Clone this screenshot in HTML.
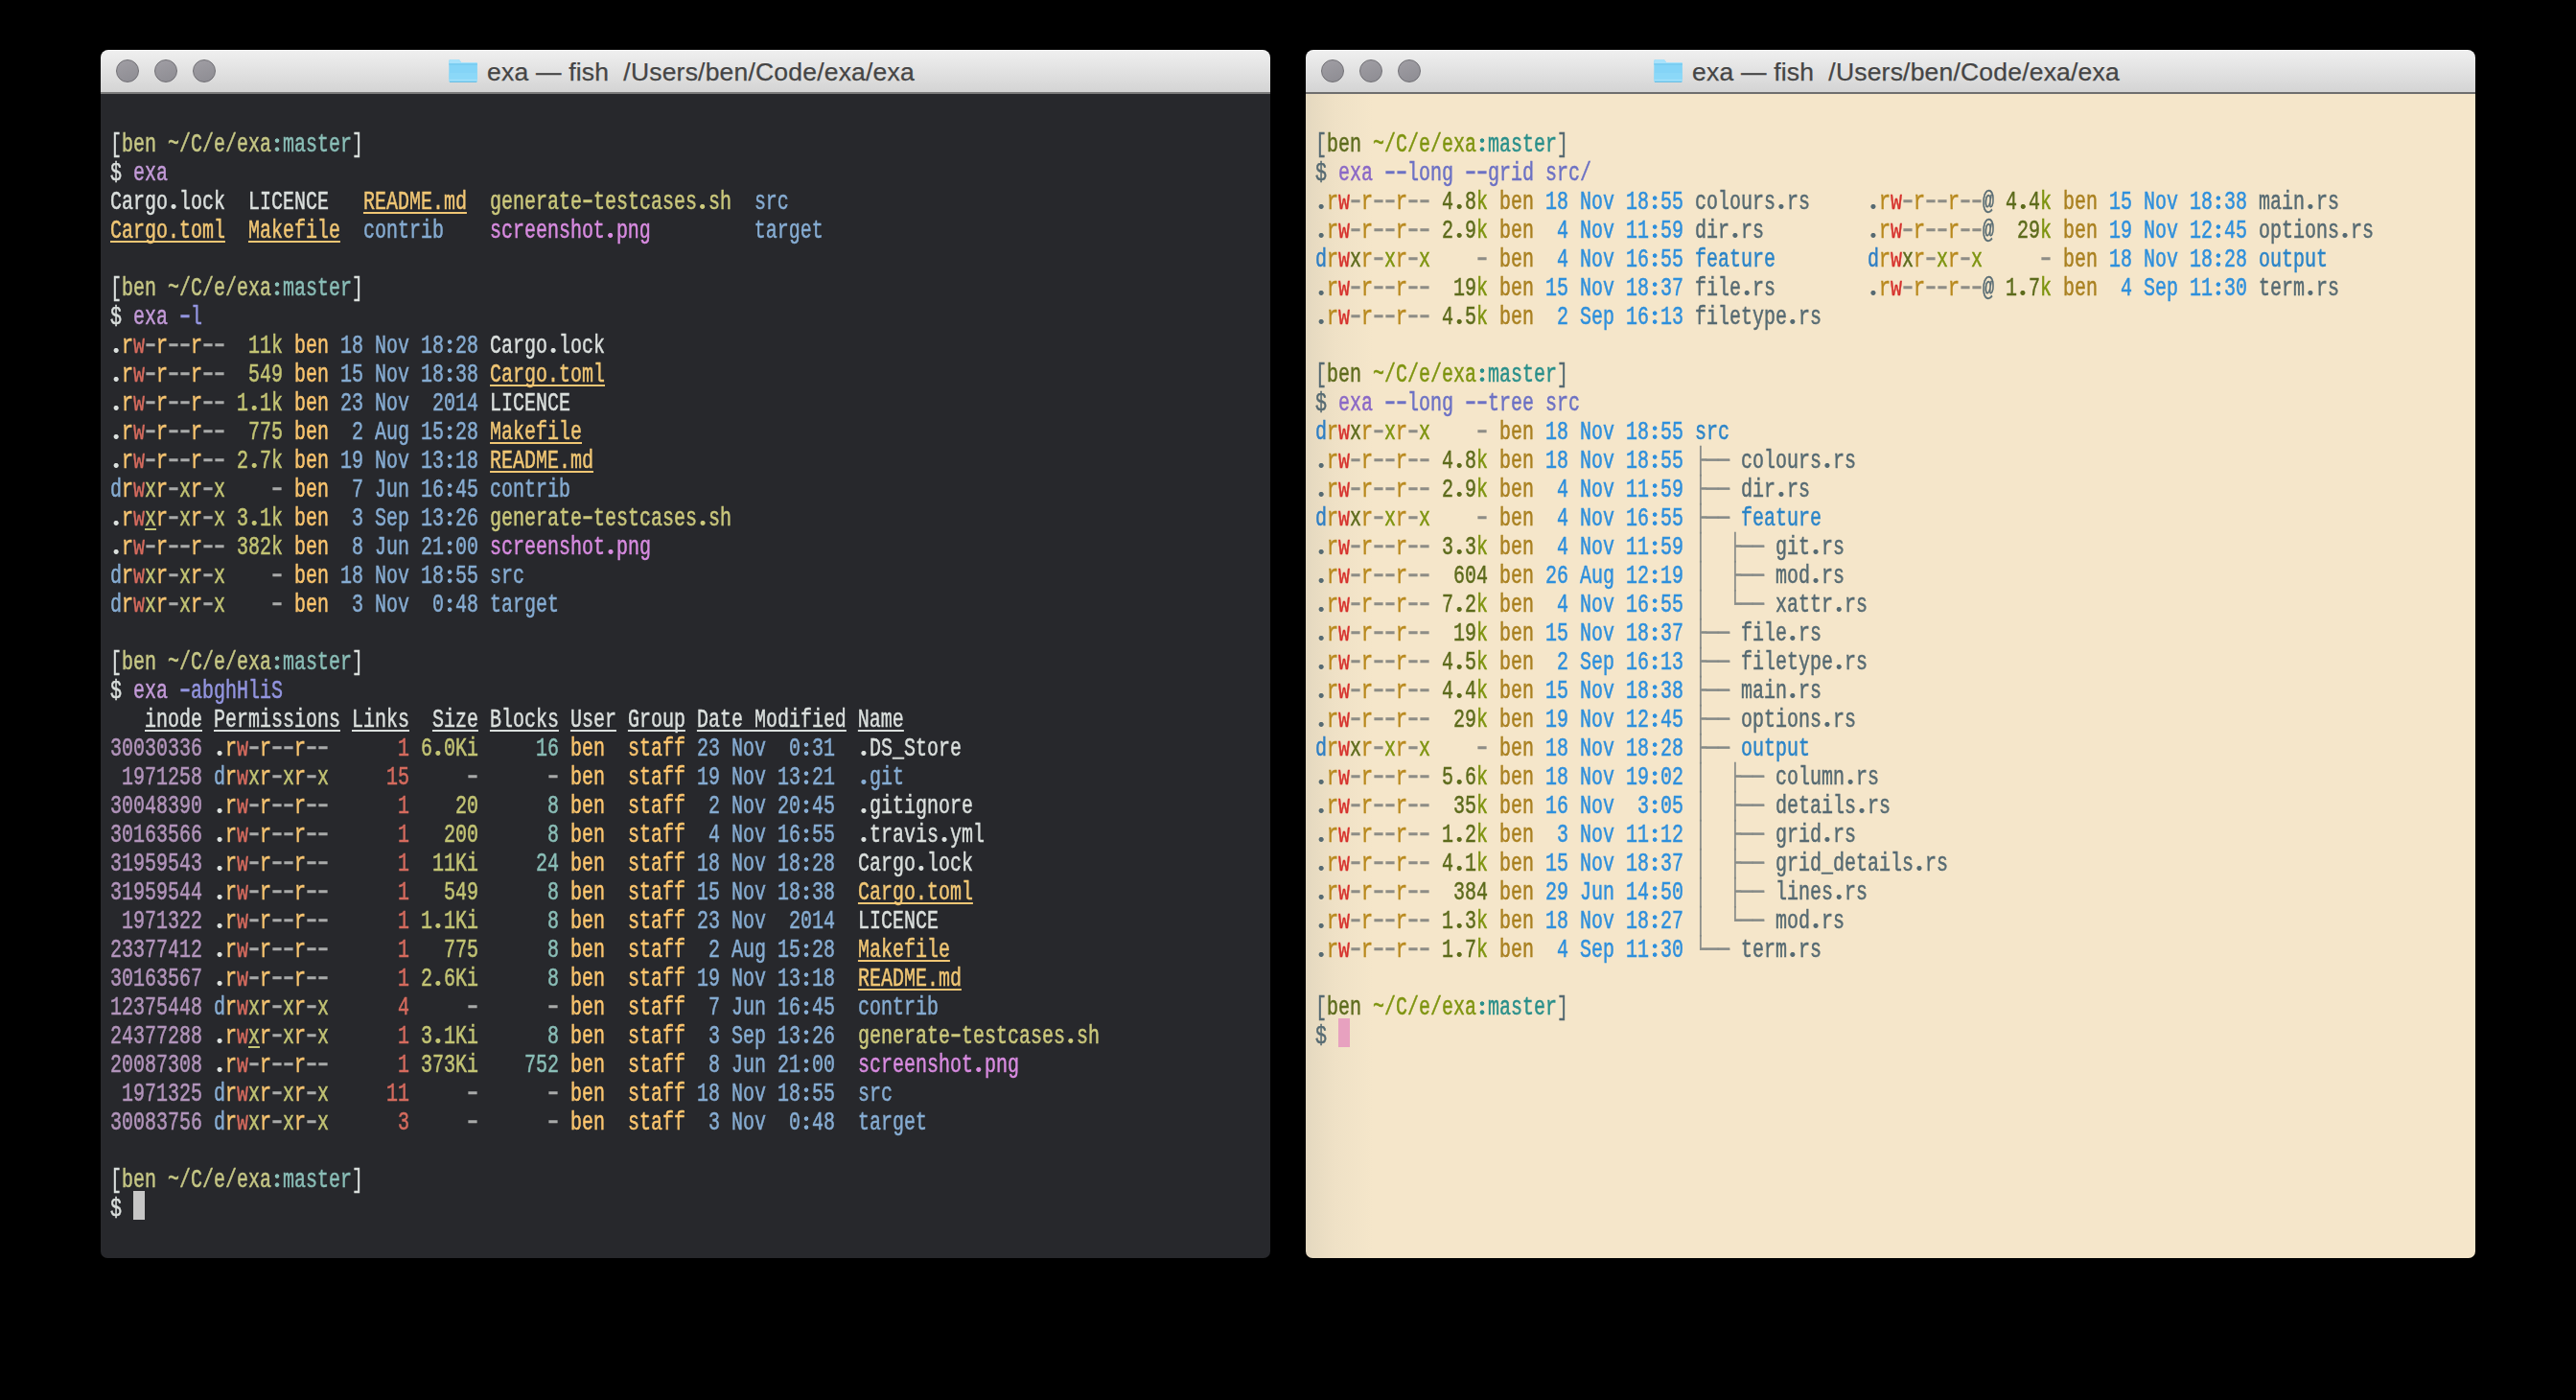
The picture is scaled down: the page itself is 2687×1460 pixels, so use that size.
<!DOCTYPE html><html><head><meta charset="utf-8"><style>

*{margin:0;padding:0;box-sizing:border-box}
html,body{width:2687px;height:1460px;background:#000;overflow:hidden}
.w{position:absolute;top:52px;width:1220px;height:1260px;border-radius:8px 8px 7px 7px;overflow:hidden}
.tb{position:absolute;left:0;top:0;width:100%;height:44px;background:linear-gradient(#efefef,#d4d4d4);border-top:1px solid #fbfbfb}
.sep{position:absolute;left:0;top:44px;width:100%;height:2px;background:#7a7a7a}
.R .sep{background:#6e6e6e}
.bd{position:absolute;left:0;top:46px;width:100%;bottom:0}
.L .bd{background:#27282c}
.R .bd{background:linear-gradient(90deg,#e4d8bf 0,#efe1c6 30px,#f5e6ca 70px,#f5e6ca 100%)}
.tl{position:absolute;top:10px;width:24px;height:24px;border-radius:50%;background:linear-gradient(160deg,#a09ea4,#8d8c92);border:1px solid #706f74}
.tt{position:absolute;top:8px;left:0;width:100%;height:32px;font:26.5px "Liberation Sans",sans-serif;color:#454545;white-space:pre;letter-spacing:0.2px;-webkit-text-stroke:0.25px #454545}
.fo{position:absolute;top:10px;width:30px;height:24px}
.tx{position:absolute;left:10px;top:0;transform-origin:0 0;transform:scaleX(0.722022)}
.r{position:absolute;left:0;white-space:pre;font:27.700px/30px "Liberation Mono",monospace}
i{font-style:normal;text-decoration-skip-ink:none}
b{font-weight:normal;display:inline-block;transform:translateY(-1px) scaleY(1.35)}
s{text-decoration:none;display:inline-block;-webkit-text-fill-color:transparent;-webkit-text-stroke-color:transparent;background:radial-gradient(3.7px 2.6px at 50% 19.6px,currentColor 72%,transparent 100%),radial-gradient(3.7px 2.6px at 50% 10.6px,currentColor 72%,transparent 100%)}
u{text-decoration:none;display:inline-block;-webkit-text-fill-color:transparent;-webkit-text-stroke-color:transparent;background:radial-gradient(4.1px 2.9px at 50% 19.4px,currentColor 72%,transparent 100%)}
.tx .r{-webkit-text-stroke:0.5px currentColor}
.cur{position:absolute;width:12px;height:30px}
/* left palette */
.L .r{color:#dadfdd}
.L .pt{color:#dadfdd}.L .pd{color:#86acd2}.L .pr{color:#f7c470}.L .pw{color:#d56b5e}
.L .px,.L .px1,.L .px1u{color:#c3c474}.L .px1u{text-decoration:underline;text-decoration-thickness:2px;text-underline-offset:3px}
.L .pn{color:#a8aaa9}.L .sz,.L .su{color:#c3c474}.L .us{color:#fbc56e}.L .dt{color:#86acd2}
.L .fn{color:#dadfdd}.L .fd{color:#86acd2}.L .fx{color:#cbc87c}.L .fi{color:#d88be0}
.L .fb{color:#f0c674;text-decoration:underline;text-decoration-thickness:2px;text-underline-offset:3px}
.L .hd{color:#dadfdd;text-decoration:underline;text-decoration-thickness:2px;text-underline-offset:3px}
.L .in{color:#b294bb}.L .ln{color:#d56b5e}.L .bk{color:#8abeb7}
.L .pb{color:#dadfdd}.L .pu,.L .pp{color:#c6c785}.L .pm{color:#8abeb7}
.L .dl{color:#dadfdd}.L .ce{color:#c39ad8}.L .ca{color:#9395e0}
.L .cur{background:#c6c6c6}
/* right palette */
.R .r{color:#566a72}
.R .pt{color:#566a72}.R .pd{color:#2f7fc4}.R .pr{color:#b8891e}.R .pw{color:#d6322d}
.R .px{color:#7e9410}.R .px1{color:#5d6b1c}.R .px1u{color:#5d6b1c;text-decoration:underline}
.R .pn{color:#8e8d86}.R .sz{color:#5d6b1c}.R .su{color:#7e9410}.R .us{color:#a98020}.R .dt{color:#2e8fdc}
.R .fn{color:#566a72}.R .fd{color:#2b84c8}.R .fx{color:#7e9410}.R .fi{color:#d33682}.R .fb{color:#a98222}
.R .tr{color:#858a87}
.R .pb{color:#566a72}.R .pu{color:#5d6b1c}.R .pp{color:#7e9410}.R .pm{color:#2a8f8a}
.R .dl{color:#566a72}.R .ce{color:#8a68c6}.R .ca{color:#6c71c4}
.R .cur{background:#e7a1bf}

</style></head><body>
<div class="w L" style="left:105px">
<div class="tb"></div><div class="sep"></div><div class="bd"></div>
<div class="tl" style="left:16px"></div>
<div class="tl" style="left:56px"></div>
<div class="tl" style="left:96px"></div>
<svg class="fo" style="left:363px" viewBox="0 0 30 24" width="30" height="24"><path d="M0.3 1.8Q0.3 0.1 2 0.1H10Q11 0.1 11.6 0.9L13 3.1H28.3Q29.9 3.1 29.9 4.6V22.3Q29.9 23.9 28.3 23.9H2Q0.3 23.9 0.3 22.3Z" fill="#84d4f7"/><path d="M0.3 1.8Q0.3 0.1 2 0.1H10Q11 0.1 11.6 0.9L13 3.1H28.3Q29.9 3.1 29.9 4.6V4.4H0.3Z" fill="#a8e2fb"/><rect x="0.3" y="4.3" width="29.6" height="1.3" fill="#73c9ef"/><rect x="0.3" y="14" width="29.6" height="6.5" fill="#8fdaf8" opacity="0.6"/><rect x="0.3" y="20.7" width="29.6" height="1.5" fill="#a3e1fa"/><rect x="1" y="23" width="28.2" height="0.9" fill="#70bcdf"/></svg>
<div class="tt" style="left:403px;width:auto">exa — fish  /Users/ben/Code/exa/exa</div>
<div class="tx">
<div class="r" style="top:84.23px"><i class="pb">[</i><i class="pu">ben</i><i class="pp"> ~/C/e/exa</i><i class="pm"><s>:</s>master</i><i class="pb">]</i></div>
<div class="r" style="top:114.23px"><i class="dl">$ </i><i class="ce">exa</i></div>
<div class="r" style="top:144.23px"><i class="fn">Cargo<u>.</u>lock</i>  <i class="fn">LICENCE</i>   <i class="fb">README.md</i>  <i class="fx">generate<b>–</b>testcases<u>.</u>sh</i>  <i class="fd">src</i></div>
<div class="r" style="top:174.23px"><i class="fb">Cargo.toml</i>  <i class="fb">Makefile</i>  <i class="fd">contrib</i>    <i class="fi">screenshot<u>.</u>png</i>         <i class="fd">target</i></div>
<div class="r" style="top:234.23px"><i class="pb">[</i><i class="pu">ben</i><i class="pp"> ~/C/e/exa</i><i class="pm"><s>:</s>master</i><i class="pb">]</i></div>
<div class="r" style="top:264.23px"><i class="dl">$ </i><i class="ce">exa</i><i class="ca"> <b>–</b>l</i></div>
<div class="r" style="top:294.23px"><i class="pt"><u>.</u></i><i class="pr">r</i><i class="pw">w</i><i class="pn"><b>–</b></i><i class="pr">r</i><i class="pn"><b>–</b></i><i class="pn"><b>–</b></i><i class="pr">r</i><i class="pn"><b>–</b></i><i class="pn"><b>–</b></i>  <i class="sz">11</i><i class="su">k</i> <i class="us">ben</i> <i class="dt">18 Nov 18<s>:</s>28</i> <i class="fn">Cargo<u>.</u>lock</i></div>
<div class="r" style="top:324.23px"><i class="pt"><u>.</u></i><i class="pr">r</i><i class="pw">w</i><i class="pn"><b>–</b></i><i class="pr">r</i><i class="pn"><b>–</b></i><i class="pn"><b>–</b></i><i class="pr">r</i><i class="pn"><b>–</b></i><i class="pn"><b>–</b></i>  <i class="sz">549</i> <i class="us">ben</i> <i class="dt">15 Nov 18<s>:</s>38</i> <i class="fb">Cargo.toml</i></div>
<div class="r" style="top:354.23px"><i class="pt"><u>.</u></i><i class="pr">r</i><i class="pw">w</i><i class="pn"><b>–</b></i><i class="pr">r</i><i class="pn"><b>–</b></i><i class="pn"><b>–</b></i><i class="pr">r</i><i class="pn"><b>–</b></i><i class="pn"><b>–</b></i> <i class="sz">1<u>.</u>1</i><i class="su">k</i> <i class="us">ben</i> <i class="dt">23 Nov  2014</i> <i class="fn">LICENCE</i></div>
<div class="r" style="top:384.23px"><i class="pt"><u>.</u></i><i class="pr">r</i><i class="pw">w</i><i class="pn"><b>–</b></i><i class="pr">r</i><i class="pn"><b>–</b></i><i class="pn"><b>–</b></i><i class="pr">r</i><i class="pn"><b>–</b></i><i class="pn"><b>–</b></i>  <i class="sz">775</i> <i class="us">ben</i> <i class="dt"> 2 Aug 15<s>:</s>28</i> <i class="fb">Makefile</i></div>
<div class="r" style="top:414.23px"><i class="pt"><u>.</u></i><i class="pr">r</i><i class="pw">w</i><i class="pn"><b>–</b></i><i class="pr">r</i><i class="pn"><b>–</b></i><i class="pn"><b>–</b></i><i class="pr">r</i><i class="pn"><b>–</b></i><i class="pn"><b>–</b></i> <i class="sz">2<u>.</u>7</i><i class="su">k</i> <i class="us">ben</i> <i class="dt">19 Nov 13<s>:</s>18</i> <i class="fb">README.md</i></div>
<div class="r" style="top:444.23px"><i class="pd">d</i><i class="pr">r</i><i class="pw">w</i><i class="px1">x</i><i class="pr">r</i><i class="pn"><b>–</b></i><i class="px">x</i><i class="pr">r</i><i class="pn"><b>–</b></i><i class="px">x</i>    <i class="pn"><b>–</b></i> <i class="us">ben</i> <i class="dt"> 7 Jun 16<s>:</s>45</i> <i class="fd">contrib</i></div>
<div class="r" style="top:474.23px"><i class="pt"><u>.</u></i><i class="pr">r</i><i class="pw">w</i><i class="px1u">x</i><i class="pr">r</i><i class="pn"><b>–</b></i><i class="px">x</i><i class="pr">r</i><i class="pn"><b>–</b></i><i class="px">x</i> <i class="sz">3<u>.</u>1</i><i class="su">k</i> <i class="us">ben</i> <i class="dt"> 3 Sep 13<s>:</s>26</i> <i class="fx">generate<b>–</b>testcases<u>.</u>sh</i></div>
<div class="r" style="top:504.23px"><i class="pt"><u>.</u></i><i class="pr">r</i><i class="pw">w</i><i class="pn"><b>–</b></i><i class="pr">r</i><i class="pn"><b>–</b></i><i class="pn"><b>–</b></i><i class="pr">r</i><i class="pn"><b>–</b></i><i class="pn"><b>–</b></i> <i class="sz">382</i><i class="su">k</i> <i class="us">ben</i> <i class="dt"> 8 Jun 21<s>:</s>00</i> <i class="fi">screenshot<u>.</u>png</i></div>
<div class="r" style="top:534.23px"><i class="pd">d</i><i class="pr">r</i><i class="pw">w</i><i class="px1">x</i><i class="pr">r</i><i class="pn"><b>–</b></i><i class="px">x</i><i class="pr">r</i><i class="pn"><b>–</b></i><i class="px">x</i>    <i class="pn"><b>–</b></i> <i class="us">ben</i> <i class="dt">18 Nov 18<s>:</s>55</i> <i class="fd">src</i></div>
<div class="r" style="top:564.23px"><i class="pd">d</i><i class="pr">r</i><i class="pw">w</i><i class="px1">x</i><i class="pr">r</i><i class="pn"><b>–</b></i><i class="px">x</i><i class="pr">r</i><i class="pn"><b>–</b></i><i class="px">x</i>    <i class="pn"><b>–</b></i> <i class="us">ben</i> <i class="dt"> 3 Nov  0<s>:</s>48</i> <i class="fd">target</i></div>
<div class="r" style="top:624.23px"><i class="pb">[</i><i class="pu">ben</i><i class="pp"> ~/C/e/exa</i><i class="pm"><s>:</s>master</i><i class="pb">]</i></div>
<div class="r" style="top:654.23px"><i class="dl">$ </i><i class="ce">exa</i><i class="ca"> <b>–</b>abghHliS</i></div>
<div class="r" style="top:684.23px">   <i class="hd">inode</i> <i class="hd">Permissions</i> <i class="hd">Links</i>  <i class="hd">Size</i> <i class="hd">Blocks</i> <i class="hd">User</i> <i class="hd">Group</i> <i class="hd">Date Modified</i> <i class="hd">Name</i></div>
<div class="r" style="top:714.23px"><i class="in">30030336</i> <i class="pt"><u>.</u></i><i class="pr">r</i><i class="pw">w</i><i class="pn"><b>–</b></i><i class="pr">r</i><i class="pn"><b>–</b></i><i class="pn"><b>–</b></i><i class="pr">r</i><i class="pn"><b>–</b></i><i class="pn"><b>–</b></i>  <i class="ln">    1</i> <i class="sz">6<u>.</u>0</i><i class="su">Ki</i> <i class="bk">    16</i> <i class="us">ben</i>  <i class="us">staff</i> <i class="dt">23 Nov  0<s>:</s>31</i>  <i class="fn"><u>.</u>DS_Store</i></div>
<div class="r" style="top:744.23px"><i class="in"> 1971258</i> <i class="pd">d</i><i class="pr">r</i><i class="pw">w</i><i class="px1">x</i><i class="pr">r</i><i class="pn"><b>–</b></i><i class="px">x</i><i class="pr">r</i><i class="pn"><b>–</b></i><i class="px">x</i>  <i class="ln">   15</i>     <i class="pn"><b>–</b></i>      <i class="pn"><b>–</b></i> <i class="us">ben</i>  <i class="us">staff</i> <i class="dt">19 Nov 13<s>:</s>21</i>  <i class="fd"><u>.</u>git</i></div>
<div class="r" style="top:774.23px"><i class="in">30048390</i> <i class="pt"><u>.</u></i><i class="pr">r</i><i class="pw">w</i><i class="pn"><b>–</b></i><i class="pr">r</i><i class="pn"><b>–</b></i><i class="pn"><b>–</b></i><i class="pr">r</i><i class="pn"><b>–</b></i><i class="pn"><b>–</b></i>  <i class="ln">    1</i>    <i class="sz">20</i> <i class="bk">     8</i> <i class="us">ben</i>  <i class="us">staff</i> <i class="dt"> 2 Nov 20<s>:</s>45</i>  <i class="fn"><u>.</u>gitignore</i></div>
<div class="r" style="top:804.23px"><i class="in">30163566</i> <i class="pt"><u>.</u></i><i class="pr">r</i><i class="pw">w</i><i class="pn"><b>–</b></i><i class="pr">r</i><i class="pn"><b>–</b></i><i class="pn"><b>–</b></i><i class="pr">r</i><i class="pn"><b>–</b></i><i class="pn"><b>–</b></i>  <i class="ln">    1</i>   <i class="sz">200</i> <i class="bk">     8</i> <i class="us">ben</i>  <i class="us">staff</i> <i class="dt"> 4 Nov 16<s>:</s>55</i>  <i class="fn"><u>.</u>travis<u>.</u>yml</i></div>
<div class="r" style="top:834.23px"><i class="in">31959543</i> <i class="pt"><u>.</u></i><i class="pr">r</i><i class="pw">w</i><i class="pn"><b>–</b></i><i class="pr">r</i><i class="pn"><b>–</b></i><i class="pn"><b>–</b></i><i class="pr">r</i><i class="pn"><b>–</b></i><i class="pn"><b>–</b></i>  <i class="ln">    1</i>  <i class="sz">11</i><i class="su">Ki</i> <i class="bk">    24</i> <i class="us">ben</i>  <i class="us">staff</i> <i class="dt">18 Nov 18<s>:</s>28</i>  <i class="fn">Cargo<u>.</u>lock</i></div>
<div class="r" style="top:864.23px"><i class="in">31959544</i> <i class="pt"><u>.</u></i><i class="pr">r</i><i class="pw">w</i><i class="pn"><b>–</b></i><i class="pr">r</i><i class="pn"><b>–</b></i><i class="pn"><b>–</b></i><i class="pr">r</i><i class="pn"><b>–</b></i><i class="pn"><b>–</b></i>  <i class="ln">    1</i>   <i class="sz">549</i> <i class="bk">     8</i> <i class="us">ben</i>  <i class="us">staff</i> <i class="dt">15 Nov 18<s>:</s>38</i>  <i class="fb">Cargo.toml</i></div>
<div class="r" style="top:894.23px"><i class="in"> 1971322</i> <i class="pt"><u>.</u></i><i class="pr">r</i><i class="pw">w</i><i class="pn"><b>–</b></i><i class="pr">r</i><i class="pn"><b>–</b></i><i class="pn"><b>–</b></i><i class="pr">r</i><i class="pn"><b>–</b></i><i class="pn"><b>–</b></i>  <i class="ln">    1</i> <i class="sz">1<u>.</u>1</i><i class="su">Ki</i> <i class="bk">     8</i> <i class="us">ben</i>  <i class="us">staff</i> <i class="dt">23 Nov  2014</i>  <i class="fn">LICENCE</i></div>
<div class="r" style="top:924.23px"><i class="in">23377412</i> <i class="pt"><u>.</u></i><i class="pr">r</i><i class="pw">w</i><i class="pn"><b>–</b></i><i class="pr">r</i><i class="pn"><b>–</b></i><i class="pn"><b>–</b></i><i class="pr">r</i><i class="pn"><b>–</b></i><i class="pn"><b>–</b></i>  <i class="ln">    1</i>   <i class="sz">775</i> <i class="bk">     8</i> <i class="us">ben</i>  <i class="us">staff</i> <i class="dt"> 2 Aug 15<s>:</s>28</i>  <i class="fb">Makefile</i></div>
<div class="r" style="top:954.23px"><i class="in">30163567</i> <i class="pt"><u>.</u></i><i class="pr">r</i><i class="pw">w</i><i class="pn"><b>–</b></i><i class="pr">r</i><i class="pn"><b>–</b></i><i class="pn"><b>–</b></i><i class="pr">r</i><i class="pn"><b>–</b></i><i class="pn"><b>–</b></i>  <i class="ln">    1</i> <i class="sz">2<u>.</u>6</i><i class="su">Ki</i> <i class="bk">     8</i> <i class="us">ben</i>  <i class="us">staff</i> <i class="dt">19 Nov 13<s>:</s>18</i>  <i class="fb">README.md</i></div>
<div class="r" style="top:984.23px"><i class="in">12375448</i> <i class="pd">d</i><i class="pr">r</i><i class="pw">w</i><i class="px1">x</i><i class="pr">r</i><i class="pn"><b>–</b></i><i class="px">x</i><i class="pr">r</i><i class="pn"><b>–</b></i><i class="px">x</i>  <i class="ln">    4</i>     <i class="pn"><b>–</b></i>      <i class="pn"><b>–</b></i> <i class="us">ben</i>  <i class="us">staff</i> <i class="dt"> 7 Jun 16<s>:</s>45</i>  <i class="fd">contrib</i></div>
<div class="r" style="top:1014.23px"><i class="in">24377288</i> <i class="pt"><u>.</u></i><i class="pr">r</i><i class="pw">w</i><i class="px1u">x</i><i class="pr">r</i><i class="pn"><b>–</b></i><i class="px">x</i><i class="pr">r</i><i class="pn"><b>–</b></i><i class="px">x</i>  <i class="ln">    1</i> <i class="sz">3<u>.</u>1</i><i class="su">Ki</i> <i class="bk">     8</i> <i class="us">ben</i>  <i class="us">staff</i> <i class="dt"> 3 Sep 13<s>:</s>26</i>  <i class="fx">generate<b>–</b>testcases<u>.</u>sh</i></div>
<div class="r" style="top:1044.23px"><i class="in">20087308</i> <i class="pt"><u>.</u></i><i class="pr">r</i><i class="pw">w</i><i class="pn"><b>–</b></i><i class="pr">r</i><i class="pn"><b>–</b></i><i class="pn"><b>–</b></i><i class="pr">r</i><i class="pn"><b>–</b></i><i class="pn"><b>–</b></i>  <i class="ln">    1</i> <i class="sz">373</i><i class="su">Ki</i> <i class="bk">   752</i> <i class="us">ben</i>  <i class="us">staff</i> <i class="dt"> 8 Jun 21<s>:</s>00</i>  <i class="fi">screenshot<u>.</u>png</i></div>
<div class="r" style="top:1074.23px"><i class="in"> 1971325</i> <i class="pd">d</i><i class="pr">r</i><i class="pw">w</i><i class="px1">x</i><i class="pr">r</i><i class="pn"><b>–</b></i><i class="px">x</i><i class="pr">r</i><i class="pn"><b>–</b></i><i class="px">x</i>  <i class="ln">   11</i>     <i class="pn"><b>–</b></i>      <i class="pn"><b>–</b></i> <i class="us">ben</i>  <i class="us">staff</i> <i class="dt">18 Nov 18<s>:</s>55</i>  <i class="fd">src</i></div>
<div class="r" style="top:1104.23px"><i class="in">30083756</i> <i class="pd">d</i><i class="pr">r</i><i class="pw">w</i><i class="px1">x</i><i class="pr">r</i><i class="pn"><b>–</b></i><i class="px">x</i><i class="pr">r</i><i class="pn"><b>–</b></i><i class="px">x</i>  <i class="ln">    3</i>     <i class="pn"><b>–</b></i>      <i class="pn"><b>–</b></i> <i class="us">ben</i>  <i class="us">staff</i> <i class="dt"> 3 Nov  0<s>:</s>48</i>  <i class="fd">target</i></div>
<div class="r" style="top:1164.23px"><i class="pb">[</i><i class="pu">ben</i><i class="pp"> ~/C/e/exa</i><i class="pm"><s>:</s>master</i><i class="pb">]</i></div>
<div class="r" style="top:1194.23px"><i class="dl">$ </i></div>
</div>
<div class="cur" style="left:34px;top:1190px"></div>
</div>
<div class="w R" style="left:1362px">
<div class="tb"></div><div class="sep"></div><div class="bd"></div>
<div class="tl" style="left:16px"></div>
<div class="tl" style="left:56px"></div>
<div class="tl" style="left:96px"></div>
<svg class="fo" style="left:363px" viewBox="0 0 30 24" width="30" height="24"><path d="M0.3 1.8Q0.3 0.1 2 0.1H10Q11 0.1 11.6 0.9L13 3.1H28.3Q29.9 3.1 29.9 4.6V22.3Q29.9 23.9 28.3 23.9H2Q0.3 23.9 0.3 22.3Z" fill="#84d4f7"/><path d="M0.3 1.8Q0.3 0.1 2 0.1H10Q11 0.1 11.6 0.9L13 3.1H28.3Q29.9 3.1 29.9 4.6V4.4H0.3Z" fill="#a8e2fb"/><rect x="0.3" y="4.3" width="29.6" height="1.3" fill="#73c9ef"/><rect x="0.3" y="14" width="29.6" height="6.5" fill="#8fdaf8" opacity="0.6"/><rect x="0.3" y="20.7" width="29.6" height="1.5" fill="#a3e1fa"/><rect x="1" y="23" width="28.2" height="0.9" fill="#70bcdf"/></svg>
<div class="tt" style="left:403px;width:auto">exa — fish  /Users/ben/Code/exa/exa</div>
<div class="tx">
<div class="r" style="top:84.23px"><i class="pb">[</i><i class="pu">ben</i><i class="pp"> ~/C/e/exa</i><i class="pm"><s>:</s>master</i><i class="pb">]</i></div>
<div class="r" style="top:114.23px"><i class="dl">$ </i><i class="ce">exa</i><i class="ca"> <b>–</b><b>–</b>long <b>–</b><b>–</b>grid src/</i></div>
<div class="r" style="top:144.23px"><i class="pt"><u>.</u></i><i class="pr">r</i><i class="pw">w</i><i class="pn"><b>–</b></i><i class="pr">r</i><i class="pn"><b>–</b></i><i class="pn"><b>–</b></i><i class="pr">r</i><i class="pn"><b>–</b></i><i class="pn"><b>–</b></i> <i class="sz">4<u>.</u>8</i><i class="su">k</i> <i class="us">ben</i> <i class="dt">18 Nov 18<s>:</s>55</i> <i class="fn">colours<u>.</u>rs</i>     <i class="pt"><u>.</u></i><i class="pr">r</i><i class="pw">w</i><i class="pn"><b>–</b></i><i class="pr">r</i><i class="pn"><b>–</b></i><i class="pn"><b>–</b></i><i class="pr">r</i><i class="pn"><b>–</b></i><i class="pn"><b>–</b></i><i class="pt">@</i> <i class="sz">4<u>.</u>4</i><i class="su">k</i> <i class="us">ben</i> <i class="dt">15 Nov 18<s>:</s>38</i> <i class="fn">main<u>.</u>rs</i></div>
<div class="r" style="top:174.23px"><i class="pt"><u>.</u></i><i class="pr">r</i><i class="pw">w</i><i class="pn"><b>–</b></i><i class="pr">r</i><i class="pn"><b>–</b></i><i class="pn"><b>–</b></i><i class="pr">r</i><i class="pn"><b>–</b></i><i class="pn"><b>–</b></i> <i class="sz">2<u>.</u>9</i><i class="su">k</i> <i class="us">ben</i> <i class="dt"> 4 Nov 11<s>:</s>59</i> <i class="fn">dir<u>.</u>rs</i>         <i class="pt"><u>.</u></i><i class="pr">r</i><i class="pw">w</i><i class="pn"><b>–</b></i><i class="pr">r</i><i class="pn"><b>–</b></i><i class="pn"><b>–</b></i><i class="pr">r</i><i class="pn"><b>–</b></i><i class="pn"><b>–</b></i><i class="pt">@</i>  <i class="sz">29</i><i class="su">k</i> <i class="us">ben</i> <i class="dt">19 Nov 12<s>:</s>45</i> <i class="fn">options<u>.</u>rs</i></div>
<div class="r" style="top:204.23px"><i class="pd">d</i><i class="pr">r</i><i class="pw">w</i><i class="px1">x</i><i class="pr">r</i><i class="pn"><b>–</b></i><i class="px">x</i><i class="pr">r</i><i class="pn"><b>–</b></i><i class="px">x</i>    <i class="pn"><b>–</b></i> <i class="us">ben</i> <i class="dt"> 4 Nov 16<s>:</s>55</i> <i class="fd">feature</i>        <i class="pd">d</i><i class="pr">r</i><i class="pw">w</i><i class="px1">x</i><i class="pr">r</i><i class="pn"><b>–</b></i><i class="px">x</i><i class="pr">r</i><i class="pn"><b>–</b></i><i class="px">x</i>     <i class="pn"><b>–</b></i> <i class="us">ben</i> <i class="dt">18 Nov 18<s>:</s>28</i> <i class="fd">output</i></div>
<div class="r" style="top:234.23px"><i class="pt"><u>.</u></i><i class="pr">r</i><i class="pw">w</i><i class="pn"><b>–</b></i><i class="pr">r</i><i class="pn"><b>–</b></i><i class="pn"><b>–</b></i><i class="pr">r</i><i class="pn"><b>–</b></i><i class="pn"><b>–</b></i>  <i class="sz">19</i><i class="su">k</i> <i class="us">ben</i> <i class="dt">15 Nov 18<s>:</s>37</i> <i class="fn">file<u>.</u>rs</i>        <i class="pt"><u>.</u></i><i class="pr">r</i><i class="pw">w</i><i class="pn"><b>–</b></i><i class="pr">r</i><i class="pn"><b>–</b></i><i class="pn"><b>–</b></i><i class="pr">r</i><i class="pn"><b>–</b></i><i class="pn"><b>–</b></i><i class="pt">@</i> <i class="sz">1<u>.</u>7</i><i class="su">k</i> <i class="us">ben</i> <i class="dt"> 4 Sep 11<s>:</s>30</i> <i class="fn">term<u>.</u>rs</i></div>
<div class="r" style="top:264.23px"><i class="pt"><u>.</u></i><i class="pr">r</i><i class="pw">w</i><i class="pn"><b>–</b></i><i class="pr">r</i><i class="pn"><b>–</b></i><i class="pn"><b>–</b></i><i class="pr">r</i><i class="pn"><b>–</b></i><i class="pn"><b>–</b></i> <i class="sz">4<u>.</u>5</i><i class="su">k</i> <i class="us">ben</i> <i class="dt"> 2 Sep 16<s>:</s>13</i> <i class="fn">filetype<u>.</u>rs</i></div>
<div class="r" style="top:324.23px"><i class="pb">[</i><i class="pu">ben</i><i class="pp"> ~/C/e/exa</i><i class="pm"><s>:</s>master</i><i class="pb">]</i></div>
<div class="r" style="top:354.23px"><i class="dl">$ </i><i class="ce">exa</i><i class="ca"> <b>–</b><b>–</b>long <b>–</b><b>–</b>tree src</i></div>
<div class="r" style="top:384.23px"><i class="pd">d</i><i class="pr">r</i><i class="pw">w</i><i class="px1">x</i><i class="pr">r</i><i class="pn"><b>–</b></i><i class="px">x</i><i class="pr">r</i><i class="pn"><b>–</b></i><i class="px">x</i>    <i class="pn"><b>–</b></i> <i class="us">ben</i> <i class="dt">18 Nov 18<s>:</s>55</i> <i class="fd">src</i></div>
<div class="r" style="top:414.23px"><i class="pt"><u>.</u></i><i class="pr">r</i><i class="pw">w</i><i class="pn"><b>–</b></i><i class="pr">r</i><i class="pn"><b>–</b></i><i class="pn"><b>–</b></i><i class="pr">r</i><i class="pn"><b>–</b></i><i class="pn"><b>–</b></i> <i class="sz">4<u>.</u>8</i><i class="su">k</i> <i class="us">ben</i> <i class="dt">18 Nov 18<s>:</s>55</i> <i class="tr">├── </i><i class="fn">colours<u>.</u>rs</i></div>
<div class="r" style="top:444.23px"><i class="pt"><u>.</u></i><i class="pr">r</i><i class="pw">w</i><i class="pn"><b>–</b></i><i class="pr">r</i><i class="pn"><b>–</b></i><i class="pn"><b>–</b></i><i class="pr">r</i><i class="pn"><b>–</b></i><i class="pn"><b>–</b></i> <i class="sz">2<u>.</u>9</i><i class="su">k</i> <i class="us">ben</i> <i class="dt"> 4 Nov 11<s>:</s>59</i> <i class="tr">├── </i><i class="fn">dir<u>.</u>rs</i></div>
<div class="r" style="top:474.23px"><i class="pd">d</i><i class="pr">r</i><i class="pw">w</i><i class="px1">x</i><i class="pr">r</i><i class="pn"><b>–</b></i><i class="px">x</i><i class="pr">r</i><i class="pn"><b>–</b></i><i class="px">x</i>    <i class="pn"><b>–</b></i> <i class="us">ben</i> <i class="dt"> 4 Nov 16<s>:</s>55</i> <i class="tr">├── </i><i class="fd">feature</i></div>
<div class="r" style="top:504.23px"><i class="pt"><u>.</u></i><i class="pr">r</i><i class="pw">w</i><i class="pn"><b>–</b></i><i class="pr">r</i><i class="pn"><b>–</b></i><i class="pn"><b>–</b></i><i class="pr">r</i><i class="pn"><b>–</b></i><i class="pn"><b>–</b></i> <i class="sz">3<u>.</u>3</i><i class="su">k</i> <i class="us">ben</i> <i class="dt"> 4 Nov 11<s>:</s>59</i> <i class="tr">│  ├── </i><i class="fn">git<u>.</u>rs</i></div>
<div class="r" style="top:534.23px"><i class="pt"><u>.</u></i><i class="pr">r</i><i class="pw">w</i><i class="pn"><b>–</b></i><i class="pr">r</i><i class="pn"><b>–</b></i><i class="pn"><b>–</b></i><i class="pr">r</i><i class="pn"><b>–</b></i><i class="pn"><b>–</b></i>  <i class="sz">604</i> <i class="us">ben</i> <i class="dt">26 Aug 12<s>:</s>19</i> <i class="tr">│  ├── </i><i class="fn">mod<u>.</u>rs</i></div>
<div class="r" style="top:564.23px"><i class="pt"><u>.</u></i><i class="pr">r</i><i class="pw">w</i><i class="pn"><b>–</b></i><i class="pr">r</i><i class="pn"><b>–</b></i><i class="pn"><b>–</b></i><i class="pr">r</i><i class="pn"><b>–</b></i><i class="pn"><b>–</b></i> <i class="sz">7<u>.</u>2</i><i class="su">k</i> <i class="us">ben</i> <i class="dt"> 4 Nov 16<s>:</s>55</i> <i class="tr">│  └── </i><i class="fn">xattr<u>.</u>rs</i></div>
<div class="r" style="top:594.23px"><i class="pt"><u>.</u></i><i class="pr">r</i><i class="pw">w</i><i class="pn"><b>–</b></i><i class="pr">r</i><i class="pn"><b>–</b></i><i class="pn"><b>–</b></i><i class="pr">r</i><i class="pn"><b>–</b></i><i class="pn"><b>–</b></i>  <i class="sz">19</i><i class="su">k</i> <i class="us">ben</i> <i class="dt">15 Nov 18<s>:</s>37</i> <i class="tr">├── </i><i class="fn">file<u>.</u>rs</i></div>
<div class="r" style="top:624.23px"><i class="pt"><u>.</u></i><i class="pr">r</i><i class="pw">w</i><i class="pn"><b>–</b></i><i class="pr">r</i><i class="pn"><b>–</b></i><i class="pn"><b>–</b></i><i class="pr">r</i><i class="pn"><b>–</b></i><i class="pn"><b>–</b></i> <i class="sz">4<u>.</u>5</i><i class="su">k</i> <i class="us">ben</i> <i class="dt"> 2 Sep 16<s>:</s>13</i> <i class="tr">├── </i><i class="fn">filetype<u>.</u>rs</i></div>
<div class="r" style="top:654.23px"><i class="pt"><u>.</u></i><i class="pr">r</i><i class="pw">w</i><i class="pn"><b>–</b></i><i class="pr">r</i><i class="pn"><b>–</b></i><i class="pn"><b>–</b></i><i class="pr">r</i><i class="pn"><b>–</b></i><i class="pn"><b>–</b></i> <i class="sz">4<u>.</u>4</i><i class="su">k</i> <i class="us">ben</i> <i class="dt">15 Nov 18<s>:</s>38</i> <i class="tr">├── </i><i class="fn">main<u>.</u>rs</i></div>
<div class="r" style="top:684.23px"><i class="pt"><u>.</u></i><i class="pr">r</i><i class="pw">w</i><i class="pn"><b>–</b></i><i class="pr">r</i><i class="pn"><b>–</b></i><i class="pn"><b>–</b></i><i class="pr">r</i><i class="pn"><b>–</b></i><i class="pn"><b>–</b></i>  <i class="sz">29</i><i class="su">k</i> <i class="us">ben</i> <i class="dt">19 Nov 12<s>:</s>45</i> <i class="tr">├── </i><i class="fn">options<u>.</u>rs</i></div>
<div class="r" style="top:714.23px"><i class="pd">d</i><i class="pr">r</i><i class="pw">w</i><i class="px1">x</i><i class="pr">r</i><i class="pn"><b>–</b></i><i class="px">x</i><i class="pr">r</i><i class="pn"><b>–</b></i><i class="px">x</i>    <i class="pn"><b>–</b></i> <i class="us">ben</i> <i class="dt">18 Nov 18<s>:</s>28</i> <i class="tr">├── </i><i class="fd">output</i></div>
<div class="r" style="top:744.23px"><i class="pt"><u>.</u></i><i class="pr">r</i><i class="pw">w</i><i class="pn"><b>–</b></i><i class="pr">r</i><i class="pn"><b>–</b></i><i class="pn"><b>–</b></i><i class="pr">r</i><i class="pn"><b>–</b></i><i class="pn"><b>–</b></i> <i class="sz">5<u>.</u>6</i><i class="su">k</i> <i class="us">ben</i> <i class="dt">18 Nov 19<s>:</s>02</i> <i class="tr">│  ├── </i><i class="fn">column<u>.</u>rs</i></div>
<div class="r" style="top:774.23px"><i class="pt"><u>.</u></i><i class="pr">r</i><i class="pw">w</i><i class="pn"><b>–</b></i><i class="pr">r</i><i class="pn"><b>–</b></i><i class="pn"><b>–</b></i><i class="pr">r</i><i class="pn"><b>–</b></i><i class="pn"><b>–</b></i>  <i class="sz">35</i><i class="su">k</i> <i class="us">ben</i> <i class="dt">16 Nov  3<s>:</s>05</i> <i class="tr">│  ├── </i><i class="fn">details<u>.</u>rs</i></div>
<div class="r" style="top:804.23px"><i class="pt"><u>.</u></i><i class="pr">r</i><i class="pw">w</i><i class="pn"><b>–</b></i><i class="pr">r</i><i class="pn"><b>–</b></i><i class="pn"><b>–</b></i><i class="pr">r</i><i class="pn"><b>–</b></i><i class="pn"><b>–</b></i> <i class="sz">1<u>.</u>2</i><i class="su">k</i> <i class="us">ben</i> <i class="dt"> 3 Nov 11<s>:</s>12</i> <i class="tr">│  ├── </i><i class="fn">grid<u>.</u>rs</i></div>
<div class="r" style="top:834.23px"><i class="pt"><u>.</u></i><i class="pr">r</i><i class="pw">w</i><i class="pn"><b>–</b></i><i class="pr">r</i><i class="pn"><b>–</b></i><i class="pn"><b>–</b></i><i class="pr">r</i><i class="pn"><b>–</b></i><i class="pn"><b>–</b></i> <i class="sz">4<u>.</u>1</i><i class="su">k</i> <i class="us">ben</i> <i class="dt">15 Nov 18<s>:</s>37</i> <i class="tr">│  ├── </i><i class="fn">grid_details<u>.</u>rs</i></div>
<div class="r" style="top:864.23px"><i class="pt"><u>.</u></i><i class="pr">r</i><i class="pw">w</i><i class="pn"><b>–</b></i><i class="pr">r</i><i class="pn"><b>–</b></i><i class="pn"><b>–</b></i><i class="pr">r</i><i class="pn"><b>–</b></i><i class="pn"><b>–</b></i>  <i class="sz">384</i> <i class="us">ben</i> <i class="dt">29 Jun 14<s>:</s>50</i> <i class="tr">│  ├── </i><i class="fn">lines<u>.</u>rs</i></div>
<div class="r" style="top:894.23px"><i class="pt"><u>.</u></i><i class="pr">r</i><i class="pw">w</i><i class="pn"><b>–</b></i><i class="pr">r</i><i class="pn"><b>–</b></i><i class="pn"><b>–</b></i><i class="pr">r</i><i class="pn"><b>–</b></i><i class="pn"><b>–</b></i> <i class="sz">1<u>.</u>3</i><i class="su">k</i> <i class="us">ben</i> <i class="dt">18 Nov 18<s>:</s>27</i> <i class="tr">│  └── </i><i class="fn">mod<u>.</u>rs</i></div>
<div class="r" style="top:924.23px"><i class="pt"><u>.</u></i><i class="pr">r</i><i class="pw">w</i><i class="pn"><b>–</b></i><i class="pr">r</i><i class="pn"><b>–</b></i><i class="pn"><b>–</b></i><i class="pr">r</i><i class="pn"><b>–</b></i><i class="pn"><b>–</b></i> <i class="sz">1<u>.</u>7</i><i class="su">k</i> <i class="us">ben</i> <i class="dt"> 4 Sep 11<s>:</s>30</i> <i class="tr">└── </i><i class="fn">term<u>.</u>rs</i></div>
<div class="r" style="top:984.23px"><i class="pb">[</i><i class="pu">ben</i><i class="pp"> ~/C/e/exa</i><i class="pm"><s>:</s>master</i><i class="pb">]</i></div>
<div class="r" style="top:1014.23px"><i class="dl">$ </i></div>
</div>
<div class="cur" style="left:34px;top:1010px"></div>
</div>
</body></html>
